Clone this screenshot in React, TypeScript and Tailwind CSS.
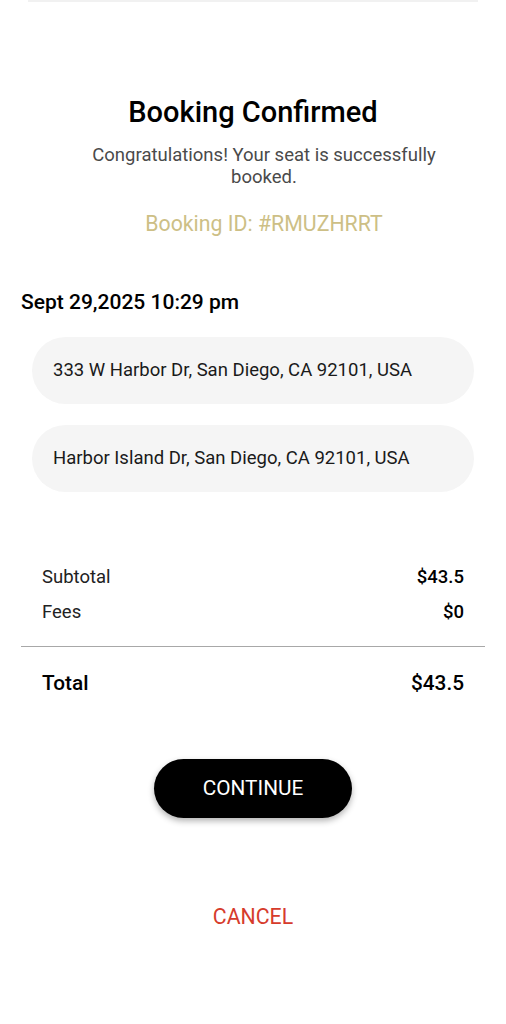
export default function App() {
  return (
    <div className="min-h-screen w-full bg-white font-['Roboto',sans-serif] text-black">
      <div className="mx-[28px] h-[2px] bg-[#f1f1f1]" />

      <div className="flex flex-col items-center pt-[90px]">
        <h1 className="text-[29px] leading-[40px] font-medium">Booking Confirmed</h1>
        <div className="flex flex-col items-center pl-[22px]">
          <p className="mt-[12px] w-[380px] text-center text-[18.5px] leading-[22px] text-[#4a4a4a]">
            Congratulations! Your seat is successfully booked.
          </p>
          <p className="mt-[22px] text-[21.3px] leading-[28px] text-[#cdbf86]">Booking ID: #RMUZHRRT</p>
        </div>
      </div>

      <div className="px-[21px] pt-[51px]">
        <p className="text-[21px] leading-[26px] font-medium">Sept 29,2025 10:29 pm</p>
      </div>

      <div className="flex flex-col gap-[21px] px-[32px] pt-[22px]">
        <div className="flex h-[67px] items-center rounded-full bg-[#f5f5f5] px-[21px] text-[18.5px] text-[#1a1a1a]">
          333 W Harbor Dr, San Diego, CA 92101, USA
        </div>
        <div className="flex h-[67px] items-center rounded-full bg-[#f5f5f5] px-[21px] text-[18.5px] text-[#1a1a1a]">
          Harbor Island Dr, San Diego, CA 92101, USA
        </div>
      </div>

      <div className="px-[42px] pt-[73px] text-[18.5px] leading-[24px]">
        <div className="flex justify-between">
          <span className="text-[#222]">Subtotal</span>
          <span className="font-medium">$43.5</span>
        </div>
        <div className="mt-[11px] flex justify-between">
          <span className="text-[#222]">Fees</span>
          <span className="font-medium">$0</span>
        </div>
      </div>

      <div className="mx-[21px] mt-[22px] h-px bg-[#a8a8a8]" />

      <div className="flex justify-between px-[42px] pt-[22px] text-[20.8px] leading-[28px] font-medium">
        <span>Total</span>
        <span>$43.5</span>
      </div>

      <div className="flex justify-center pt-[62px]">
        <button className="h-[59px] w-[198px] rounded-full bg-black text-[20.8px] text-white shadow-[0_3px_6px_rgba(0,0,0,0.3)]">
          CONTINUE
        </button>
      </div>

      <div className="flex justify-center pt-[85px]">
        <button className="text-[21.3px] leading-[28px] text-[#d63b2c]">CANCEL</button>
      </div>
    </div>
  );
}
